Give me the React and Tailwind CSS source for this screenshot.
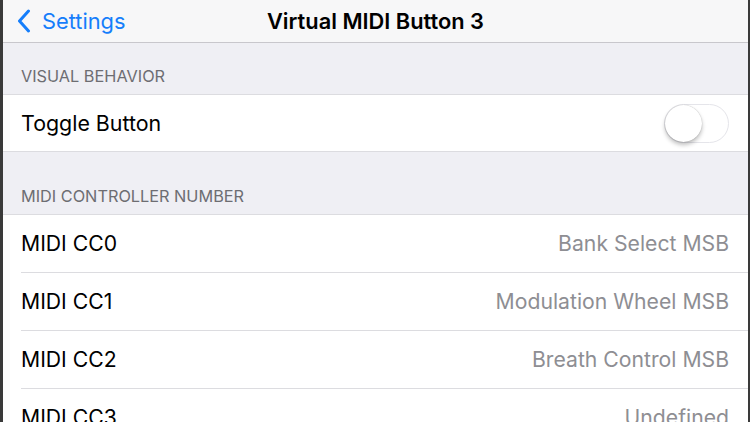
import React from "react";

const rows = [
  { label: "MIDI CC0", value: "Bank Select MSB" },
  { label: "MIDI CC1", value: "Modulation Wheel MSB" },
  { label: "MIDI CC2", value: "Breath Control MSB" },
  { label: "MIDI CC3", value: "Undefined" },
];

// iOS style back chevron
const BackChevron = () => (
  <svg width="14" height="24" viewBox="0 0 14 24" fill="none">
    <path d="M11.5 2 L2.5 12 L11.5 22" stroke="#157efb" strokeWidth="3" strokeLinecap="round" strokeLinejoin="round" />
  </svg>
);

const SectionHeader = ({ title, height }) => (
  <div className={`shrink-0 flex items-end pl-[18px] pb-[6px] bg-[#efeff4] border-b border-[#dcdce0] ${height}`}>
    <span className="text-[16.3px] text-[#6d6d72]">{title}</span>
  </div>
);

export default function App() {
  return (
    <div
      className="w-[750px] h-[422px] overflow-hidden bg-[#efeff4] border-l-[3px] border-r-[2px] border-[#3a3a3a] flex flex-col"
      style={{ fontFamily: "Inter, 'Liberation Sans', sans-serif" }}
    >
      {/* nav bar */}
      <div className="relative h-[43px] shrink-0 bg-[#f7f7f8] border-b border-[#c8c7cc] flex items-center">
        <div className="flex items-center gap-[11px] pl-[14px]">
          <BackChevron />
          <span className="text-[21.8px] text-[#157efb]">Settings</span>
        </div>
        <span className="absolute left-0 right-0 text-center text-[21.8px] font-semibold text-black pointer-events-none">
          Virtual MIDI Button 3
        </span>
      </div>

      <SectionHeader title="VISUAL BEHAVIOR" height="h-[52px]" />

      <div className="h-[57px] shrink-0 bg-white border-b border-[#dcdce0] flex items-center justify-between pl-[18px] pr-[19px]">
        <span className="text-[21.4px] text-black">Toggle Button</span>
        <div className="w-[65px] h-[39px] rounded-full border-[1.5px] border-[#e5e5ea] bg-white flex items-center">
          <div className="w-[37px] h-[37px] rounded-full bg-white shadow-[0_3px_4px_rgba(0,0,0,0.25),0_0_1px_rgba(0,0,0,0.3)]" />
        </div>
      </div>

      <SectionHeader title="MIDI CONTROLLER NUMBER" height="h-[63px]" />

      <div className="bg-white flex flex-col shrink-0">
        {rows.map((r) => (
          <div key={r.label} className="pl-[18px] shrink-0">
            <div className="h-[58px] border-b border-[#dcdce0] flex items-center justify-between pr-[19px]">
              <span className="text-[21.2px] text-black">{r.label}</span>
              <span className="text-[21.2px] text-[#8e8e93]">{r.value}</span>
            </div>
          </div>
        ))}
      </div>
    </div>
  );
}
